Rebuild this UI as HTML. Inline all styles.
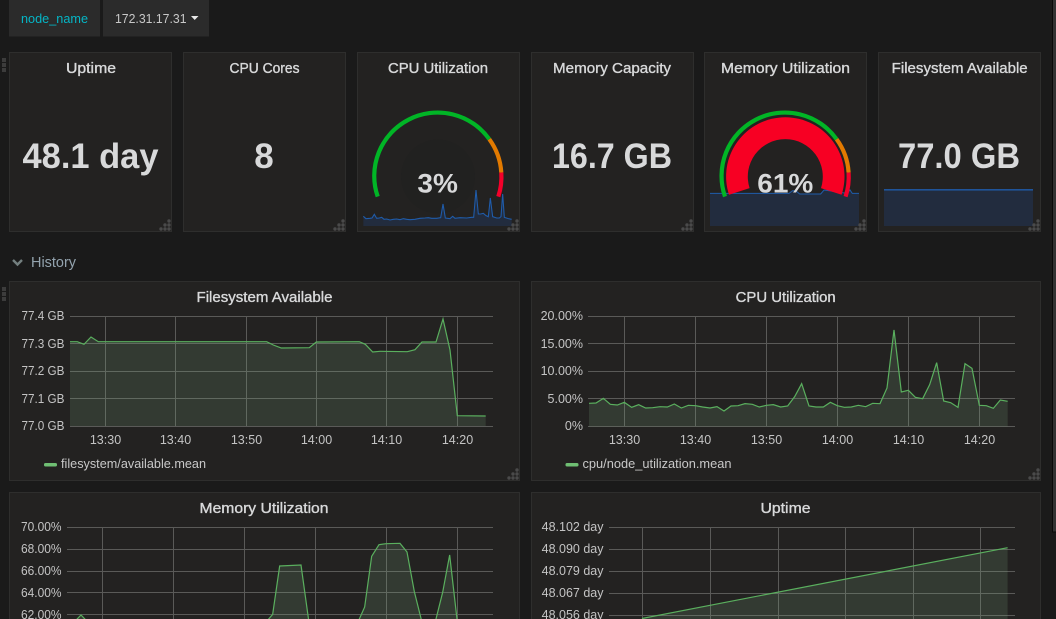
<!DOCTYPE html>
<html><head><meta charset="utf-8"><style>
html,body{margin:0;padding:0;background:#1a1a1a;width:1056px;height:619px;overflow:hidden}
svg{display:block}
text{font-family:"Liberation Sans",sans-serif}
.t{font-size:14.5px;fill:#d8d9da;stroke:#d8d9da;stroke-width:.35;text-anchor:middle}
.b{font-size:35px;font-weight:bold;fill:#d8d9da;text-anchor:middle}
.g{font-size:27px;font-weight:bold;fill:#d8d9da;text-anchor:middle}
.y{font-size:12.5px;fill:#c4c4c4;text-anchor:end}
.x{font-size:12.5px;fill:#c4c4c4;text-anchor:middle}
.l{font-size:12.5px;fill:#c8c8c8}
.p{fill:#232221;stroke:#2e2e2d;stroke-width:1}
.gr{stroke:#5a5a58;stroke-width:1;fill:none}
.s{fill:rgb(130,170,130);fill-opacity:.18;stroke:none}
.ln{fill:none;stroke:#5aaf5e;stroke-width:1.2}
.sf{fill:#222c3e;stroke:none}
.sl{fill:none;stroke:#1f5cab;stroke-width:1}
</style></head><body>
<svg width="1056" height="619" viewBox="0 0 1056 619" xmlns="http://www.w3.org/2000/svg">
<defs>
<g id="rz" fill="#4a4a4a"><circle cx="-2" cy="-10" r="1.7"/><circle cx="-2" cy="-6" r="1.7"/><circle cx="-6" cy="-6" r="1.7"/><circle cx="-2" cy="-2" r="1.7"/><circle cx="-6" cy="-2" r="1.7"/><circle cx="-10" cy="-2" r="1.7"/></g>
<g id="dh" fill="#3c3c3c"><rect x="2" y="0" width="4" height="4"/><rect x="2" y="5" width="4" height="4"/><rect x="2" y="10" width="4" height="4"/></g>
</defs>
<rect width="1056" height="619" fill="#1a1a1a"/>
<rect x="1052.5" y="-2" width="6" height="534" fill="#333" stroke="#0a0a0a"/>

<rect x="9" y="0" width="91" height="36.5" fill="#2b2b2b"/>
<rect x="103" y="0" width="106" height="36.5" fill="#2b2b2b"/>
<text x="21" y="23" font-size="13" fill="#05b5c5" textLength="67" lengthAdjust="spacingAndGlyphs">node_name</text>
<text x="115" y="23" font-size="13" fill="#c8c8c8" textLength="71.5" lengthAdjust="spacingAndGlyphs">172.31.17.31</text>
<path d="M191 16H198.5L194.7 20Z" fill="#e8e8e8"/>

<use href="#dh" y="58"/><use href="#dh" y="287"/>

<rect class="p" x="9.5" y="52.5" width="162" height="179"/>
<rect class="p" x="183.5" y="52.5" width="162" height="179"/>
<rect class="p" x="357.5" y="52.5" width="162" height="179"/>
<rect class="p" x="531.5" y="52.5" width="162" height="179"/>
<rect class="p" x="704.5" y="52.5" width="162" height="179"/>
<rect class="p" x="878.5" y="52.5" width="162" height="179"/>

<text class="t" x="91" y="73" textLength="50" lengthAdjust="spacingAndGlyphs">Uptime</text>
<text class="t" x="264.5" y="73" textLength="70" lengthAdjust="spacingAndGlyphs">CPU Cores</text>
<text class="t" x="438" y="73" textLength="100" lengthAdjust="spacingAndGlyphs">CPU Utilization</text>
<text class="t" x="612" y="73" textLength="118" lengthAdjust="spacingAndGlyphs">Memory Capacity</text>
<text class="t" x="785.5" y="73" textLength="129" lengthAdjust="spacingAndGlyphs">Memory Utilization</text>
<text class="t" x="959.7" y="73" textLength="136" lengthAdjust="spacingAndGlyphs">Filesystem Available</text>

<text class="b" x="90.5" y="168" textLength="136" lengthAdjust="spacingAndGlyphs">48.1 day</text>
<text class="b" x="264" y="168">8</text>
<text class="b" x="612" y="168" textLength="120" lengthAdjust="spacingAndGlyphs">16.7 GB</text>
<text class="b" x="959" y="168" textLength="122" lengthAdjust="spacingAndGlyphs">77.0 GB</text>

<!-- CPU gauge -->
<circle cx="438" cy="176.5" r="37" fill="#212120"/>
<g transform="translate(360 100) scale(.33333)">
<path class="sf" d="M10 349L18 356 30 355 36 354 43 343 50 355 58 354 65 352 72 358 80 357 90 360 100 358 110 357 120 359 130 356 140 358 150 359 165 358 180 355 195 354 205 353 215 355 230 355 242 353 249 312 256 354 270 356 278 349 285 355 300 353 320 354 335 352 341 352 348 270 355 342 362 342 370 340 378 347 385 350 391 294 398 350 410 354 418 354 423 350 428 282 433 352 445 356 455 358V378H10Z"/>
<path class="sl" style="stroke-width:3.2" d="M10 349L18 356 30 355 36 354 43 343 50 355 58 354 65 352 72 358 80 357 90 360 100 358 110 357 120 359 130 356 140 358 150 359 165 358 180 355 195 354 205 353 215 355 230 355 242 353 249 312 256 354 270 356 278 349 285 355 300 353 320 354 335 352 341 352 348 270 355 342 362 342 370 340 378 347 385 350 391 294 398 350 410 354 418 354 423 350 428 282 433 352 445 356 455 358"/>
</g>
<g fill="none" stroke-width="4.2">
<path stroke="#01b526" d="M377.7 196.6A63.4 63.4 0 0 1 489.3 139.2"/>
<path stroke="#e27a00" d="M489.3 139.2A63.4 63.4 0 0 1 501.3 172.5"/>
<path stroke="#f4002a" d="M501.3 172.5A63.4 63.4 0 0 1 498.3 196.6"/>
</g>
<text class="g" x="437.7" y="192.7" textLength="40.5" lengthAdjust="spacingAndGlyphs">3%</text>

<!-- Memory gauge -->
<path class="sf" d="M710 193.4H789L792.5 190.7 795.7 190.7 799.7 194H820.7L824 190 847 193.4 850 190 852.3 193.4H859V226H710Z"/>
<path class="sl" d="M710 193.4H789L792.5 190.7 795.7 190.7 799.7 194H820.7L824 190 847 193.4 850 190 852.3 193.4H859"/>
<path fill="#f70023" d="M729 194.8A59.2 59.2 0 1 1 841.6 194.8L821 188.1A37.5 37.5 0 1 0 749.6 188.1Z"/>
<g fill="none" stroke-width="4.2">
<path stroke="#01b526" d="M725 196.6A63.4 63.4 0 0 1 836.6 139.2"/>
<path stroke="#e27a00" d="M836.6 139.2A63.4 63.4 0 0 1 848.6 172.5"/>
<path stroke="#f4002a" d="M848.6 172.5A63.4 63.4 0 0 1 845.6 196.6"/>
</g>
<text class="g" x="785.3" y="192.7" textLength="56" lengthAdjust="spacingAndGlyphs">61%</text>

<!-- FS spark -->
<rect class="sf" x="884" y="190" width="149" height="36"/>
<path class="sl" style="stroke-width:1.4" d="M884 189.8H1033"/>

<use href="#rz" x="171" y="231"/><use href="#rz" x="345" y="231"/><use href="#rz" x="519" y="231"/><use href="#rz" x="693" y="231"/><use href="#rz" x="866" y="231"/><use href="#rz" x="1040" y="231"/>

<!-- History row -->
<path d="M13 260L17.5 264.5 22 260" fill="none" stroke="#737f7f" stroke-width="2.4"/>
<text x="31" y="267" font-size="14.5" fill="#93a3ae" textLength="45" lengthAdjust="spacingAndGlyphs">History</text>

<!-- Panel: FS -->
<rect class="p" x="9.5" y="281.5" width="510" height="199"/>
<text class="t" x="264.5" y="302" textLength="136" lengthAdjust="spacingAndGlyphs">Filesystem Available</text>
<path class="gr" d="M70 316.5H493M70 343.5H493M70 371.5H493M70 398.5H493M70 426.5H493M105.5 316V426M175.5 316V426M246.5 316V426M316.5 316V426M386.5 316V426M457.5 316V426"/>
<path class="s" d="M70 341.7L77.3 341.7 84 344.3 91 337 98.3 341.7 266.7 341.7 273.3 345 281.3 348 309.3 347.7 316.3 342 359.3 341.7 365.3 344.3 372.7 352 380 351.3 407.3 351.7 415 349.7 422 342 436 342 443 319 450 350 457.3 415.7 485.7 416V426H70Z"/>
<path class="ln" d="M70 341.7L77.3 341.7 84 344.3 91 337 98.3 341.7 266.7 341.7 273.3 345 281.3 348 309.3 347.7 316.3 342 359.3 341.7 365.3 344.3 372.7 352 380 351.3 407.3 351.7 415 349.7 422 342 436 342 443 319 450 350 457.3 415.7 485.7 416"/>
<text class="y" x="64.5" y="320" textLength="43" lengthAdjust="spacingAndGlyphs">77.4 GB</text><text class="y" x="64.5" y="348" textLength="43" lengthAdjust="spacingAndGlyphs">77.3 GB</text><text class="y" x="64.5" y="375" textLength="43" lengthAdjust="spacingAndGlyphs">77.2 GB</text><text class="y" x="64.5" y="403" textLength="43" lengthAdjust="spacingAndGlyphs">77.1 GB</text><text class="y" x="64.5" y="430" textLength="43" lengthAdjust="spacingAndGlyphs">77.0 GB</text>
<text class="x" x="105.5" y="444">13:30</text><text class="x" x="175.5" y="444">13:40</text><text class="x" x="246.5" y="444">13:50</text><text class="x" x="316.5" y="444">14:00</text><text class="x" x="386.5" y="444">14:10</text><text class="x" x="457.5" y="444">14:20</text>
<rect x="44" y="463" width="13" height="3.5" rx="1.5" fill="#6fbf73"/>
<text class="l" x="61" y="468" textLength="145" lengthAdjust="spacingAndGlyphs">filesystem/available.mean</text>
<use href="#rz" x="519" y="480"/>

<!-- Panel: CPU -->
<rect class="p" x="531.5" y="281.5" width="509" height="199"/>
<text class="t" x="785.7" y="302" textLength="100" lengthAdjust="spacingAndGlyphs">CPU Utilization</text>
<path class="gr" d="M588 316.5H1015M588 343.5H1015M588 371.5H1015M588 398.5H1015M588 426.5H1015M624.5 316V426M695.5 316V426M766.5 316V426M837.5 316V426M908.5 316V426M979.5 316V426"/>
<g transform="translate(525 280) scale(.33333)">
<path class="s" d="M192 370L213 369 235 355 256 373 277 375 298 367 320 382 341 374 362 384 383 383 405 380 427 381 448 372 469 384 490 376 512 377 533 381 555 384 576 380 597 393 618 378 639 377 660 371 682 373 703 381 724 376 745 374 767 381 788 378 809 350 830 311 852 378 873 381 895 381 916 367 937 377 958 382 979 381 1000 376 1022 380 1043 370 1065 371 1086 324 1107 150 1129 336 1150 331 1171 352 1193 356 1214 314 1235 248 1256 363 1277 368 1299 382 1320 251 1341 265 1363 376 1384 377 1405 385 1426 360 1448 364V439H192Z"/>
<path class="ln" style="stroke-width:3.6" d="M192 370L213 369 235 355 256 373 277 375 298 367 320 382 341 374 362 384 383 383 405 380 427 381 448 372 469 384 490 376 512 377 533 381 555 384 576 380 597 393 618 378 639 377 660 371 682 373 703 381 724 376 745 374 767 381 788 378 809 350 830 311 852 378 873 381 895 381 916 367 937 377 958 382 979 381 1000 376 1022 380 1043 370 1065 371 1086 324 1107 150 1129 336 1150 331 1171 352 1193 356 1214 314 1235 248 1256 363 1277 368 1299 382 1320 251 1341 265 1363 376 1384 377 1405 385 1426 360 1448 364"/>
</g>
<text class="y" x="583" y="320">20.00%</text><text class="y" x="583" y="348">15.00%</text><text class="y" x="583" y="375">10.00%</text><text class="y" x="583" y="403">5.00%</text><text class="y" x="583" y="430">0%</text>
<text class="x" x="624.5" y="444">13:30</text><text class="x" x="695.5" y="444">13:40</text><text class="x" x="766.5" y="444">13:50</text><text class="x" x="837.5" y="444">14:00</text><text class="x" x="908.5" y="444">14:10</text><text class="x" x="979.5" y="444">14:20</text>
<rect x="565.5" y="463" width="13" height="3.5" rx="1.5" fill="#6fbf73"/>
<text class="l" x="582.5" y="468" textLength="149" lengthAdjust="spacingAndGlyphs">cpu/node_utilization.mean</text>
<use href="#rz" x="1040" y="480"/>

<!-- Panel: Memory -->
<rect class="p" x="9.5" y="492.5" width="510" height="140"/>
<text class="t" x="264" y="513" textLength="129" lengthAdjust="spacingAndGlyphs">Memory Utilization</text>
<path class="gr" d="M67 527.5H493M67 549.5H493M67 571.5H493M67 592.5H493M67 614.5H493M102.5 527V619M173.5 527V619M244.5 527V619M315.5 527V619M386.5 527V619M457.5 527V619"/>
<g transform="translate(0 485) scale(.33333)">
<path class="s" d="M222 412L243 390 264 412ZM790 420L806 402 818 388 839 243 903 240 928 420ZM1062 420L1078 402 1094 366 1115 214 1137 179 1158 176 1200 175 1221 201 1243 320 1268 420ZM1300 420L1308 402 1328 322 1349 210 1373 420Z"/>
<path class="ln" style="stroke-width:3.6" d="M222 412L243 390 264 412M790 420L806 402 818 388 839 243 903 240 928 420M1062 420L1078 402 1094 366 1115 214 1137 179 1158 176 1200 175 1221 201 1243 320 1268 420M1300 420L1308 402 1328 322 1349 210 1373 420"/>
</g>
<text class="y" x="61.5" y="531" textLength="40.5" lengthAdjust="spacingAndGlyphs">70.00%</text><text class="y" x="61.5" y="553" textLength="40.5" lengthAdjust="spacingAndGlyphs">68.00%</text><text class="y" x="61.5" y="575" textLength="40.5" lengthAdjust="spacingAndGlyphs">66.00%</text><text class="y" x="61.5" y="597" textLength="40.5" lengthAdjust="spacingAndGlyphs">64.00%</text><text class="y" x="61.5" y="619" textLength="40.5" lengthAdjust="spacingAndGlyphs">62.00%</text>

<!-- Panel: Uptime -->
<rect class="p" x="531.5" y="492.5" width="509" height="140"/>
<text class="t" x="785.5" y="513" textLength="50" lengthAdjust="spacingAndGlyphs">Uptime</text>
<path class="gr" d="M609 527.5H1015M609 549.5H1015M609 571.5H1015M609 593.5H1015M609 615.5H1015M642.5 527V619M710.5 527V619M778.5 527V619M845.5 527V619M913.5 527V619M980.5 527V619"/>
<path class="s" d="M642 618.5L1007.6 547.7V620H642Z"/>
<path class="ln" d="M642 618.5L1007.6 547.7"/>
<text class="y" x="603.5" y="531">48.102 day</text><text class="y" x="603.5" y="553">48.090 day</text><text class="y" x="603.5" y="575">48.079 day</text><text class="y" x="603.5" y="597">48.067 day</text><text class="y" x="603.5" y="619">48.056 day</text>
</svg>
</body></html>
